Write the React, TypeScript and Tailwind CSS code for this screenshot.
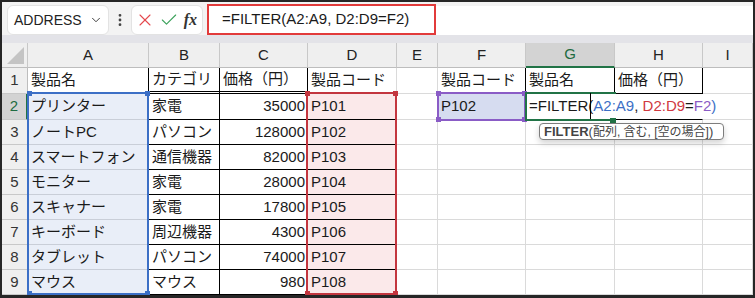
import { ChevronDown, X, Check, EllipsisVertical } from "lucide-react";

const rows: string[][] = [
  ["製品名", "カテゴリ", "価格（円）", "製品コード", "", "製品コード", "製品名", "価格（円）", ""],
  ["プリンター", "家電", "35000", "P101", "", "P102", "", "", ""],
  ["ノートPC", "パソコン", "128000", "P102", "", "", "", "", ""],
  ["スマートフォン", "通信機器", "82000", "P103", "", "", "", "", ""],
  ["モニター", "家電", "28000", "P104", "", "", "", "", ""],
  ["スキャナー", "家電", "17800", "P105", "", "", "", "", ""],
  ["キーボード", "周辺機器", "4300", "P106", "", "", "", "", ""],
  ["タブレット", "パソコン", "74000", "P107", "", "", "", "", ""],
  ["マウス", "マウス", "980", "P108", "", "", "", "", ""],
];

const letters = ["A", "B", "C", "D", "E", "F", "G", "H", "I"];

function cellClass(r: number, c: number) {
  // r: 1..9, c: 1..9 (A..I)
  let cls = "border-r border-b border-r-[#dadada] border-b-[#dadada] bg-white";
  if (r === 1) {
    if (c === 1) cls = "border-r border-b border-r-black border-b-[#dadada] bg-white";
    if (c === 2 || c === 3)
      cls = "border-r border-b-[3px] border-double border-r-black border-b-black bg-white";
    if (c === 6 || c === 7) cls = "border-r border-b border-r-black border-b-[#dadada] bg-white";
    if (c === 8) cls = "border-r border-b border-r-black border-b-black bg-white";
  } else {
    if (c === 1) cls = "border-r border-b border-r-black border-b-[#c9ced8] bg-[#e9eef8]";
    if (c === 2 || c === 3) cls = "border-r border-b border-r-black border-b-black bg-white";
    if (c === 4) cls = "border-r border-b border-r-[#dadada] border-b-black bg-[#fbe9ea]";
    if (r === 2 && c === 6) cls = "border-r border-b border-r-[#dadada] border-b-[#dadada] bg-[#d6dcf0]";
    if (r === 2 && c === 8) cls = "border-r border-b border-r-[#dadada] border-b-black bg-white";
  }
  return cls;
}

export default function App() {
  return (
    <div className="w-[755px] h-[298px] bg-[#262626] pt-[2px] pl-[2px] pr-[2px] pb-[3px] font-['Liberation_Sans','Noto_Sans_CJK_JP',sans-serif] text-[#1a1a1a]">
      <div className="h-full bg-[#f3f3f3] flex flex-col overflow-hidden">
        {/* toolbar */}
        <div className="h-[33px] flex items-end pl-[5px]">
          <div className="w-[102px] h-[30px] bg-white border border-[#e3e3e3] rounded-[6px] flex items-center justify-between pl-[6px] pr-[5px]">
            <span className="text-[14px] text-[#222]">ADDRESS</span>
            <ChevronDown size={14} strokeWidth={1.6} className="text-[#333]" />
          </div>
          <div className="w-[22px] h-[30px] flex items-center justify-center">
            <EllipsisVertical size={16} strokeWidth={2.2} className="text-[#444]" />
          </div>
          <div className="w-[72px] h-[30px] bg-white border border-[#e3e3e3] rounded-[6px] flex items-center justify-between pl-[3px] pr-[4px]">
            <X size={20} strokeWidth={1.3} className="text-[#e5484d]" />
            <Check size={20} strokeWidth={1.3} className="text-[#3aa15a]" />
            <span className="font-['Liberation_Serif',serif] italic font-bold text-[16px] text-[#333] pr-[1px]">fx</span>
          </div>
          <div className="ml-[4px] flex-1 h-[31px] flex items-end">
            <div className="w-[229px] h-[31px] bg-white border-2 border-[#e23b3b] flex items-center pl-[13px] text-[15px] text-[#1a1a1a]">
              =FILTER(A2:A9, D2:D9=F2)
            </div>
            <div className="flex-1 h-[29px] bg-white" />
          </div>
        </div>
        <div className="h-[8px] bg-[#e3e3e8]" />

        {/* sheet */}
        <div className="relative flex-1">
          <div className="grid grid-cols-[26px_121px_71px_88px_89px_41px_88px_89px_88px_50px] grid-rows-[25px_26px_26px_repeat(7,25px)] text-[15px]">
            {/* header row */}
            <div className="bg-[#efefef] border-r border-b border-r-[#c8c8c8] border-b-[#bdbdbd] flex items-end justify-end p-[3px]">
              <svg width="17" height="17" viewBox="0 0 17 17">
                <polygon points="17,0 17,17 0,17" fill="#c4c4c4" />
              </svg>
            </div>
            {letters.map((l) =>
              l === "G" ? (
                <div
                  key={l}
                  className="bg-[#d3d3d3] border-r border-r-[#c8c8c8] border-b-2 border-b-[#217346] flex items-center justify-center text-[#1e6b41]"
                >
                  {l}
                </div>
              ) : (
                <div
                  key={l}
                  className="bg-[#efefef] border-r border-b border-r-[#c8c8c8] border-b-[#bdbdbd] flex items-center justify-center text-[#222]"
                >
                  {l}
                </div>
              )
            )}

            {rows.map((row, ri) => {
              const r = ri + 1;
              return [
                r === 2 ? (
                  <div
                    key={`h${r}`}
                    className="bg-[#d3d3d3] border-r-2 border-b border-r-[#217346] border-b-[#c8c8c8] flex items-center justify-center text-[#1e6b41]"
                  >
                    {r}
                  </div>
                ) : (
                  <div
                    key={`h${r}`}
                    className="bg-[#efefef] border-r border-b border-r-[#bdbdbd] border-b-[#c8c8c8] flex items-center justify-center text-[#333]"
                  >
                    {r}
                  </div>
                ),
                ...row.map((v, ci) => {
                  const c = ci + 1;
                  const right = c === 3 && r > 1;
                  return (
                    <div
                      key={`${r}-${c}`}
                      className={`${cellClass(r, c)} flex items-center whitespace-nowrap overflow-hidden ${
                        right ? "justify-end pr-[2px]" : "pl-[3px]"
                      }`}
                    >
                      {v}
                    </div>
                  );
                }),
              ];
            })}
          </div>

          {/* A2:A9 reference */}
          <div className="absolute left-[25px] top-[49px] w-[122px] h-[203px] border-2 border-[#3c6fc6]" />
          <div className="absolute left-[25px] top-[48px] w-[5px] h-[5px] bg-[#3c6fc6]" />
          <div className="absolute left-[143px] top-[48px] w-[5px] h-[5px] bg-[#3c6fc6]" />
          <div className="absolute left-[25px] top-[248px] w-[5px] h-[5px] bg-[#3c6fc6]" />
          <div className="absolute left-[143px] top-[248px] w-[5px] h-[5px] bg-[#3c6fc6]" />

          {/* D2:D9 reference */}
          <div className="absolute left-[304px] top-[49px] w-[91px] h-[203px] border-2 border-[#c3363f]" />
          <div className="absolute left-[303px] top-[48px] w-[5px] h-[5px] bg-[#c3363f]" />
          <div className="absolute left-[391px] top-[48px] w-[5px] h-[5px] bg-[#c3363f]" />
          <div className="absolute left-[303px] top-[248px] w-[5px] h-[5px] bg-[#c3363f]" />
          <div className="absolute left-[391px] top-[248px] w-[5px] h-[5px] bg-[#c3363f]" />

          {/* F2 reference */}
          <div className="absolute left-[435px] top-[49px] w-[89px] h-[29px] border-2 border-[#8a5cc6]" />
          <div className="absolute left-[434px] top-[48px] w-[5px] h-[5px] bg-[#8a5cc6]" />
          <div className="absolute left-[520px] top-[48px] w-[5px] h-[5px] bg-[#8a5cc6]" />
          <div className="absolute left-[434px] top-[74px] w-[5px] h-[5px] bg-[#8a5cc6]" />
          <div className="absolute left-[520px] top-[74px] w-[5px] h-[5px] bg-[#8a5cc6]" />

          {/* G2 active cell in edit mode */}
          <div className="absolute left-[523px] top-[49px] w-[91px] h-[29px] border-l-2 border-t-2 border-b-2 border-[#217346]" />
          <div className="absolute left-[525px] top-[51px] w-[192px] h-[25px] bg-white flex items-center pl-[2px] text-[15px] whitespace-nowrap">
            <span className="text-[#1a1a1a]">=FILTER(</span>
            <span className="text-[#3c6fc6]">A2:A9</span>
            <span className="text-[#1a1a1a]">,&nbsp;</span>
            <span className="text-[#d0383f]">D2:D9</span>
            <span className="text-[#1a1a1a]">=</span>
            <span className="text-[#8a5cc6]">F2</span>
            <span className="text-[#3c6fc6]">)</span>
          </div>
          <div className="absolute left-[588px] top-[50px] w-px h-[26px] bg-black" />
          <div className="absolute left-[608px] top-[75px] w-[6px] h-[5px] bg-[#217346]" />

          {/* function tooltip */}
          <div className="absolute left-[537px] top-[80px] w-[185px] h-[17px] bg-white border border-[#7d7d7d] rounded-[4px] shadow-[0_3px_6px_rgba(0,0,0,0.18)] flex items-center pl-[4px] text-[12px] text-[#444] whitespace-nowrap leading-none">
            <span className="font-bold text-[13px]">FILTER</span>
            <span className="text-[13px]">(</span>
            <span>配列, 含む, [空の場合]</span>
            <span className="text-[13px]">)</span>
          </div>
        </div>
      </div>
    </div>
  );
}
